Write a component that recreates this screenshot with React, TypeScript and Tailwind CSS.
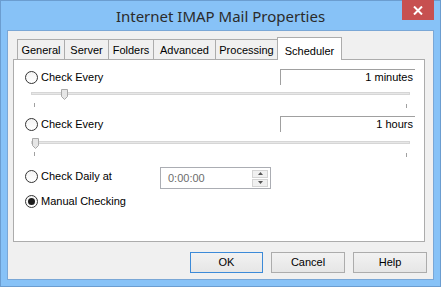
import type { ReactNode } from "react"

const font = { fontFamily: '"Liberation Sans", Arial, sans-serif' }

const tabs = [
  { label: "General", w: "w-[48px]" },
  { label: "Server", w: "w-[45px]" },
  { label: "Folders", w: "w-[46px]" },
  { label: "Advanced", w: "w-[63px]" },
  { label: "Processing", w: "w-[63px]" },
]

function Radio({ checked, children }: { checked?: boolean; children: ReactNode }) {
  return (
    <label className="flex items-center gap-[3px] text-[11px] leading-[13px] text-black">
      <span className="w-[13px] h-[13px] rounded-full border border-[#333] bg-gradient-to-b from-[#f4f4f4] to-white flex items-center justify-center">
        {checked && <span className="w-[7px] h-[7px] rounded-full bg-[#1c1c1c]" />}
      </span>
      {children}
    </label>
  )
}

function Slider({ thumb, rightTick = true }: { thumb: number; rightTick?: boolean }) {
  return (
    <div className="relative ml-[17px] w-[379px] h-[21px]">
      <div className="absolute left-0 right-0 top-[5px] h-[3px] bg-[#e7e7e7] border border-[#d6d6d6]" />
      <svg className="absolute top-[2px]" style={{ left: thumb }} width="7" height="11" viewBox="0 0 7 11">
        <path d="M0.5 0.5 H6.5 V7.5 L3.5 10.5 L0.5 7.5 Z" fill="#e6e6e6" stroke="#a9a9a9" />
      </svg>
      <div className="absolute left-[3px] top-[16px] w-px h-[4px] bg-[#a0a0a0]" />
      {rightTick && <div className="absolute left-[375px] top-[17px] w-px h-[4px] bg-[#a0a0a0]" />}
    </div>
  )
}

function ValueBox({ children }: { children: ReactNode }) {
  return (
    <div className="w-[135px] h-[16px] border-t border-l border-[#a0a0a0] bg-white text-right pr-[2px] text-[11px] leading-[15px] text-black">
      {children}
    </div>
  )
}

export default function App() {
  return (
    <div className="w-[441px] h-[287px] bg-[#87c2f7] border border-[#6b9dd0] flex flex-col" style={font}>
      <div className="relative h-[29px] flex items-center justify-center">
        <span className="text-[15px] text-[#2b2b2b] pt-[1px]" style={{ fontFamily: '"Noto Sans", "Open Sans", sans-serif' }}>
          Internet IMAP Mail Properties
        </span>
        <button className="absolute right-[6px] top-[-1px] w-[32px] h-[20px] bg-[#c75050] flex items-center justify-center">
          <svg width="10" height="9" viewBox="0 0 10 9">
            <path d="M1 0.5 L9 8.5 M9 0.5 L1 8.5" stroke="white" strokeWidth="2" />
          </svg>
        </button>
      </div>
      <div className="mx-[6px] h-[250px] border border-[#7aa7d6] bg-[#f0f0f0] flex flex-col">
        <div className="mt-[5px] ml-[9px] flex items-end h-[23px] relative z-10">
          {tabs.map((t, i) => (
            <div
              key={t.label}
              className={`${t.w} h-[20px] border border-b-0 border-[#acacac] bg-[#f0f0f0] text-[11px] text-black flex items-center justify-center pt-[2px] ${i > 0 ? "-ml-px" : ""}`}
            >
              {t.label}
            </div>
          ))}
          <div className="w-[65px] h-[23px] -ml-px -mb-px border border-b-0 border-[#acacac] bg-white text-[11px] text-black flex items-start justify-center pt-[5px]">
            Scheduler
          </div>
        </div>
        <div className="ml-[5px] w-[412px] h-[183px] border border-[#acacac] bg-white flex flex-col pl-[11px] pr-[9px]">
          <div className="mt-[9px] h-[16px] flex items-center justify-between">
            <Radio>Check Every</Radio>
            <ValueBox>1 minutes</ValueBox>
          </div>
          <div className="-ml-[11px] mt-[2px]">
            <Slider thumb={30} />
          </div>
          <div className="mt-[8px] h-[16px] flex items-center justify-between">
            <Radio>Check Every</Radio>
            <ValueBox>1 hours</ValueBox>
          </div>
          <div className="-ml-[11px] mt-[4px]">
            <Slider thumb={1} />
          </div>
          <div className="mt-[10px] h-[22px] flex items-center">
            <div className="mb-[3px] w-[135px]">
              <Radio>Check Daily at</Radio>
            </div>
            <div className="w-[111px] h-[22px] border border-[#abadb3] bg-white flex items-center justify-between pl-[7px] pr-[2px]">
              <span className="text-[11px] text-[#6d6d6d]">0:00:00</span>
              <div className="flex flex-col gap-px">
                <div className="w-[16px] h-[8px] bg-[#f0f0f0] border border-[#d4d4d4] flex items-center justify-center">
                  <svg width="5" height="3" viewBox="0 0 5 3"><path d="M2.5 0 L5 3 H0 Z" fill="#555" /></svg>
                </div>
                <div className="w-[16px] h-[8px] bg-[#f0f0f0] border border-[#d4d4d4] flex items-center justify-center">
                  <svg width="5" height="3" viewBox="0 0 5 3"><path d="M0 0 H5 L2.5 3 Z" fill="#555" /></svg>
                </div>
              </div>
            </div>
          </div>
          <div className="mt-[6px]">
            <Radio checked>Manual Checking</Radio>
          </div>
        </div>
        <div className="flex justify-end gap-[8px] pr-[6px] mt-[10px]">
          <button className="w-[73px] h-[21px] border border-[#3c8ad8] bg-gradient-to-b from-[#f2f2f2] to-[#e6e6e6] text-[11px] text-black">OK</button>
          <button className="w-[74px] h-[21px] border border-[#acacac] bg-gradient-to-b from-[#f2f2f2] to-[#e6e6e6] text-[11px] text-black">Cancel</button>
          <button className="w-[74px] h-[21px] border border-[#acacac] bg-gradient-to-b from-[#f2f2f2] to-[#e6e6e6] text-[11px] text-black">Help</button>
        </div>
      </div>
    </div>
  )
}
